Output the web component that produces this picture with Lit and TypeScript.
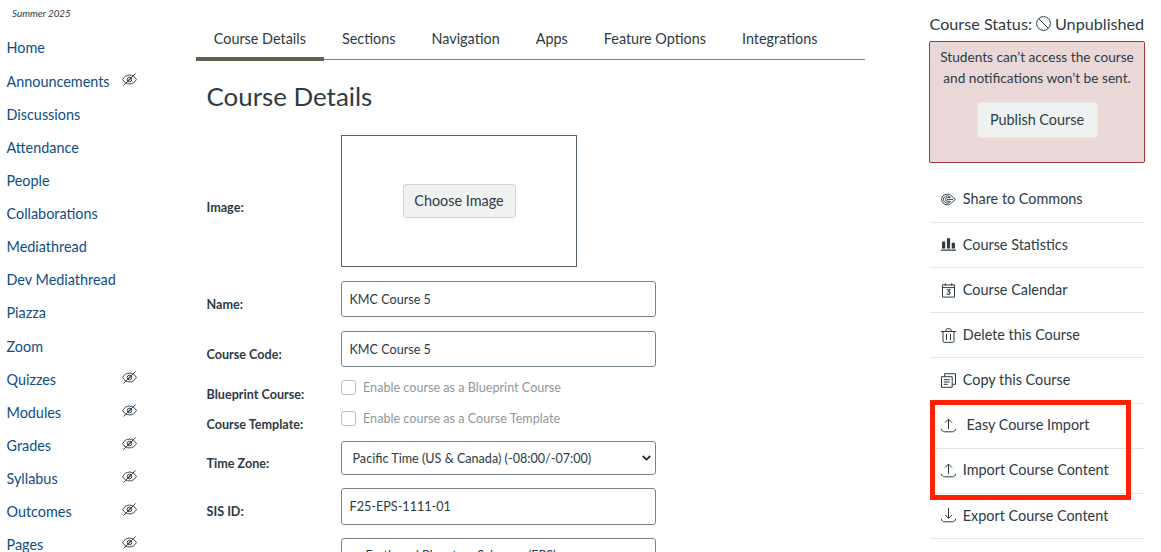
import { LitElement, html, css, svg } from "lit";
import { customElement, property } from "lit/decorators.js";

const glyphs: Record<string, unknown> = {
  hidden: svg`<g fill="none" stroke="currentColor" stroke-width=".95">
    <path d="M.6 7.500C2.200 4.600 4.600 3.100 7.500 3.100s5.300 1.500 6.900 4.400c-1.600 2.900-4 4.400-6.900 4.400S2.200 10.400 .6 7.500Z"/>
    <circle cx="7.500" cy="7.500" r="2.300"/><circle cx="7.500" cy="7.500" r=".6"/><path d="M1.400 13.600 13.600 1.400"/></g>`,
  none: svg`<g fill="none" stroke="currentColor" stroke-width="1"><circle cx="7.500" cy="7.500" r="6.900"/><path d="M2.700 2.700 12.300 12.300"/></g>`,
  commons: svg`<g fill="none" stroke="currentColor" stroke-width=".95">
    <path d="M10.500 4C9 2.300 7.300 2 5.700 2.100 2.600 2.400.6 4.700.6 7.400s2.200 5.200 5.300 5.400c2 .1 3.500-.6 4.700-2"/>
    <path d="M9.500 5.200C8.300 4.100 7.200 3.800 6 3.900 3.900 4 2.400 5.600 2.400 7.400S4 11 6 11.100c1.300.1 2.500-.4 3.500-1.300"/>
    <path d="M10.400 4 14.300 7.400 10.500 10.900M9.400 5.600H6.300a1.850 1.850 0 0 0 0 3.700H9.400M6 7.450H12"/></g>`,
  stats: svg`<path fill="currentColor" d="M1 4.400h3.200v7H1zM5.900 1.200h3.200v10.200H5.900zM10.700 5.800h3.200v5.600h-3.200zM0 12.600h15v1.200H0z"/>`,
  calendar: svg`<g fill="none" stroke="currentColor" stroke-width="1"><path d="M1.500 1.900h12v12.200h-12zM1.500 4.600h12M4.300.3v2.600M10.700.3v2.600"/>
    <path stroke-width="1.100" d="M5.700 6.800h3.200L7.400 8.600c2.100-.1 2.200 2.600.2 2.700-.8 0-1.500-.2-2-.6"/></g>`,
  trash: svg`<g fill="none" stroke="currentColor" stroke-width="1"><path d="M0 3.500h15M4.900 3.300V2.100c0-.9.500-1.400 1.300-1.400h2.600c.8 0 1.300.5 1.300 1.400v1.200M2 3.700v9.300c0 .8.500 1.300 1.300 1.300h8.400c.8 0 1.300-.5 1.300-1.300V3.700M5.500 6v6M9.500 6v6"/></g>`,
  copy: svg`<g fill="none" stroke="currentColor" stroke-width="1"><path d="M.5 3.700h10.700v10.600H.5zM3.700 3.500V.7h10.800v10.600h-3.100M2.800 6.700h6M2.800 9h6M2.800 11.300h4"/></g>`,
  up: svg`<g fill="none" stroke="currentColor" stroke-width="1"><path d="M7.500 11V1.200M4 4.600 7.500 1.100 11 4.600M.3 10.800c.4 1.900 1.500 3 3.400 3h7.600c1.900 0 3-1.100 3.400-3"/></g>`,
  down: svg`<g fill="none" stroke="currentColor" stroke-width="1"><path d="M7.500 0v10.300M4 6.900l3.500 3.500L11 6.900M.3 10.800c.4 1.900 1.500 3 3.400 3h7.600c1.900 0 3-1.100 3.400-3"/></g>`,
};

@customElement("line-icon")
export class LineIcon extends LitElement {
  static styles = css`
    :host { display: inline-block; width: 15px; height: 15px; flex: none; }
    .glyph { display: block; width: 100%; height: 100%; overflow: visible; }
  `;
  @property() name = "";
  render() {
    return html`<svg class="glyph" viewBox="0 0 15 15">${glyphs[this.name]}</svg>`;
  }
}

const navItems: [string, boolean][] = [
  ["Home", false], ["Announcements", true], ["Discussions", false], ["Attendance", false],
  ["People", false], ["Collaborations", false], ["Mediathread", false], ["Dev Mediathread", false],
  ["Piazza", false], ["Zoom", false], ["Quizzes", true], ["Modules", true], ["Grades", true],
  ["Syllabus", true], ["Outcomes", true], ["Pages", true],
];
const tabs = ["Course Details", "Sections", "Navigation", "Apps", "Feature Options", "Integrations"];
const actions: [string, string][] = [
  ["commons", "Share to Commons"], ["stats", "Course Statistics"], ["calendar", "Course Calendar"],
  ["trash", "Delete this Course"], ["copy", "Copy this Course"], ["up", "Easy Course Import"],
  ["up", "Import Course Content"], ["down", "Export Course Content"],
];

@customElement("app-root")
export class AppRoot extends LitElement {
  static styles = css`
    :host {
      display: block; position: relative; height: 552px; overflow: hidden; background: #fff;
      color: #2d3b45; font-family: Lato, "Liberation Sans", sans-serif; font-size: 14.4px;
    }
    * { box-sizing: border-box; }
    .page { display: grid; grid-template-columns: 196px 669px 280px; height: 552px; }
    .nav { padding: 3px 0 0 6.5px; }
    .term { font-size: 9.9px; font-style: italic; line-height: 20px; padding-left: 5.5px; height: 28.35px; }
    .nav-row { display: flex; height: 33.13px; align-items: center; color: #0e4e86; white-space: nowrap; width: 130px; justify-content: space-between; }
    .nav-row line-icon { color: #2d3b45; margin-top: -4px; }
    .tabs { display: flex; height: 60px; border-bottom: 1px solid #73818c; }
    .tab { height: 61px; padding: 29px 18px 0; line-height: 20px; white-space: nowrap; }
    .tab.active { border-bottom: 4px solid #665f55; padding: 29px 18px 0 17.75px; }
    .title { margin: 19px 0 0 10.5px; font-size: 25.9px; line-height: 34px; font-weight: 400; height: 56px; }
    .row { display: flex; padding-left: 10.5px; font-size: 12.62px; }
    .label { width: 134.5px; font-weight: 700; line-height: 20px; white-space: nowrap; }
    .picture { width: 236px; height: 132px; border: 1px solid #55636f; display: flex; align-items: center; justify-content: center; }
    .btn { display: flex; align-items: center; justify-content: center; background: #f0f2f2; border: 1px solid #ced3d6; border-radius: 3px; font-size: 14.4px; line-height: 18px; padding-bottom: 1px; white-space: nowrap; }
    .choose { width: 113px; height: 34px; }
    .field { width: 315px; border: 1px solid #78858f; border-radius: 3px; padding: 0 7.5px; display: flex; align-items: center; justify-content: space-between; white-space: nowrap; }
    .field.select { padding: 0 4px 0 10.5px; }
    .chevron { width: 9px; height: 6px; flex: none; }
    .check { display: flex; align-items: center; height: 15px; color: #8f979d; gap: 7px; white-space: nowrap; }
    .box { width: 15px; height: 15px; border: 1px solid #b9bfc4; border-radius: 3px; }
    .r-image { height: 146px; } .r-image .label { padding-top: 63px; }
    .r-name { height: 50px; } .r-name .field, .r-code .field { height: 36px; }
    .r-name .label, .r-code .label { padding-top: 14px; }
    .r-code { height: 49px; }
    .r-blue { height: 31px; } .r-blue .label { padding-top: 5px; }
    .r-tmpl { height: 30px; } .r-tmpl .label { padding-top: 4px; }
    .r-zone { height: 47px; } .r-zone .field { height: 34px; } .r-zone .label { padding-top: 13px; }
    .r-sis { height: 50px; } .r-sis .field { height: 37px; } .r-sis .label { padding-top: 14px; }
    .r-dept .field { height: 34px; } .r-dept .field.select { padding-left: 23.5px; }
    .r-blue .check span, .r-tmpl .check span, .r-zone .field span { line-height: 15px; }
    .side { width: 216px; margin-left: 64px; }
    .status { display: flex; align-items: center; height: 41px; padding-top: 6px; font-size: 16.2px; white-space: nowrap; padding-left: .5px; }
    .status line-icon { margin: -1px 4px 0 4px; }
    .alert { height: 122px; background: #ead8d9; border: 1px solid #a3383f; border-radius: 2px; padding-top: 4px; display: flex; flex-direction: column; align-items: center; text-align: center; font-size: 13.68px; line-height: 21px; white-space: nowrap; }
    .publish { width: 121px; height: 36px; margin-top: 14px; padding-bottom: 0; border-color: #e5e8e8; }
    .actions { padding: 14.7px 1px 0 1px; }
    .action { display: flex; align-items: center; gap: 6.8px; height: 45.18px; padding-left: 11px; border-bottom: 1px solid #e3e5e7; white-space: nowrap; }
    .action span { padding-bottom: 1.7px; }
    .action.spaced { gap: 10.5px; }
    .highlight { position: absolute; left: 930px; top: 400px; width: 201px; height: 100px; border: 5px solid #ff2101; }
  `;

  private input(kind: string, label: string, value: string) {
    return html`<div class="row ${kind}"><div class="label">${label}</div><div class="field"><span>${value}</span></div></div>`;
  }
  private select(kind: string, label: string, value: string) {
    return html`<div class="row ${kind}"><div class="label">${label}</div><div class="field select"><span>${value}</span>
      <svg class="chevron" viewBox="0 0 9 6"><path d="M.8 1 4.500 4.600 8.200 1" fill="none" stroke="#1f2b33" stroke-width="1.800"/></svg></div></div>`;
  }
  private check(kind: string, label: string, value: string) {
    return html`<div class="row ${kind}"><div class="label">${label}</div><div class="check"><span class="box"></span><span>${value}</span></div></div>`;
  }

  render() {
    return html`
      <div class="page">
        <nav class="nav">
          <div class="term">Summer 2025</div>
          ${navItems.map(([name, hidden]) => html`<div class="nav-row"><span>${name}</span>${hidden ? html`<line-icon name="hidden"></line-icon>` : ""}</div>`)}
        </nav>
        <main>
          <div class="tabs">${tabs.map((t, i) => html`<div class="tab ${i === 0 ? "active" : ""}">${t}</div>`)}</div>
          <h2 class="title">Course Details</h2>
          <div class="row r-image"><div class="label">Image:</div><div class="picture"><div class="btn choose">Choose Image</div></div></div>
          ${this.input("r-name", "Name:", "KMC Course 5")}
          ${this.input("r-code", "Course Code:", "KMC Course 5")}
          ${this.check("r-blue", "Blueprint Course:", "Enable course as a Blueprint Course")}
          ${this.check("r-tmpl", "Course Template:", "Enable course as a Course Template")}
          ${this.select("r-zone", "Time Zone:", "Pacific Time (US & Canada) (-08:00/-07:00)")}
          ${this.input("r-sis", "SIS ID:", "F25-EPS-1111-01")}
          ${this.select("r-dept", "", "Earth and Planetary Sciences (EPS)")}
        </main>
        <aside class="side">
          <div class="status"><span>Course Status:</span><line-icon name="none"></line-icon><span>Unpublished</span></div>
          <div class="alert"><div>Students can’t access the course</div><div>and notifications won’t be sent.</div><div class="btn publish">Publish Course</div></div>
          <div class="actions">${actions.map(([icon, name]) => html`<div class="action ${name.startsWith("Easy") ? "spaced" : ""}"><line-icon name=${icon}></line-icon><span>${name}</span></div>`)}</div>
        </aside>
      </div>
      <div class="highlight"></div>`;
  }
}
